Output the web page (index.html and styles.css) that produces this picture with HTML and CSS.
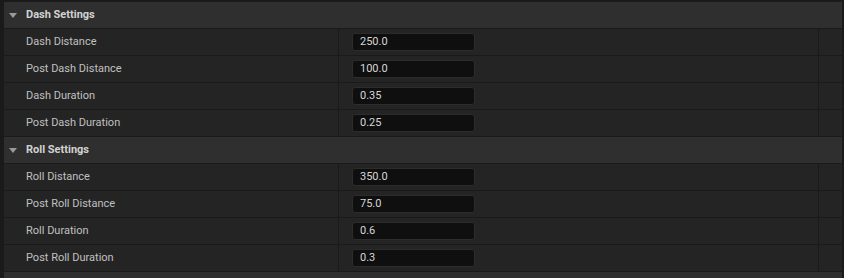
FILE: index.html
```html
<!DOCTYPE html>
<html>
<head>
<meta charset="utf-8">
<link rel="stylesheet" href="styles.css">
</head>
<body>
<div class="panel">
  <div class="cat"><span class="arrow"></span><span class="cat-title">Dash Settings</span></div>
  <div class="row"><div class="name">Dash Distance</div><div class="val"><div class="inp">250.0</div></div><div class="ext"></div></div>
  <div class="row"><div class="name">Post Dash Distance</div><div class="val"><div class="inp">100.0</div></div><div class="ext"></div></div>
  <div class="row"><div class="name">Dash Duration</div><div class="val"><div class="inp">0.35</div></div><div class="ext"></div></div>
  <div class="row"><div class="name">Post Dash Duration</div><div class="val"><div class="inp">0.25</div></div><div class="ext"></div></div>
  <div class="cat"><span class="arrow"></span><span class="cat-title">Roll Settings</span></div>
  <div class="row"><div class="name">Roll Distance</div><div class="val"><div class="inp">350.0</div></div><div class="ext"></div></div>
  <div class="row"><div class="name">Post Roll Distance</div><div class="val"><div class="inp">75.0</div></div><div class="ext"></div></div>
  <div class="row"><div class="name">Roll Duration</div><div class="val"><div class="inp">0.6</div></div><div class="ext"></div></div>
  <div class="row"><div class="name">Post Roll Duration</div><div class="val"><div class="inp">0.3</div></div><div class="ext"></div></div>
  <div class="cat"></div>
</div>
</body>
</html>
```
FILE: styles.css
```css
html, body {
  margin: 0;
  padding: 0;
  background: #1a1a1a;
  height: 100%;
  overflow: hidden;
}
body {
  font-family: Roboto, "Liberation Sans", sans-serif;
  font-size: 11px;
  line-height: 13px;
  color: #c0c0c0;
}
.panel {
  padding: 2px 2px 0 4px;
  display: flex;
  flex-direction: column;
  height: 100%;
  box-sizing: border-box;
  overflow: hidden;
}
.cat {
  height: 27px;
  box-sizing: border-box;
  flex: none;
  border-bottom: 1px solid #1a1a1a;
  background: #2f2f2f;
  display: flex;
  align-items: flex-start;
  padding: 6px 0 0 5px;
}
.arrow {
  width: 0;
  height: 0;
  border-left: 4px solid transparent;
  border-right: 4px solid transparent;
  border-top: 5px solid #9a9a9a;
  margin-right: 9px;
  margin-top: 5px;
}
.cat-title {
  font-weight: bold;
  color: #d2d2d2;
}
.row {
  height: 27px;
  box-sizing: border-box;
  flex: none;
  border-bottom: 1px solid #1a1a1a;
  background: #242424;
  display: flex;
}
.name {
  width: 312px;
  padding: 6px 0 0 22px;
  border-right: 1px solid #1a1a1a;
}
.val {
  width: 480px;
  border-right: 1px solid #1a1a1a;
  padding: 4px 0 0 13px;
  box-sizing: border-box;
}
.inp {
  width: 123px;
  height: 18px;
  box-sizing: border-box;
  background: #0f0f0f;
  border: 1px solid #2c2c2c;
  border-radius: 3px;
  padding: 1px 0 0 7px;
  color: #d6d6d6;
}
.ext {
  flex: 1;
}
```
